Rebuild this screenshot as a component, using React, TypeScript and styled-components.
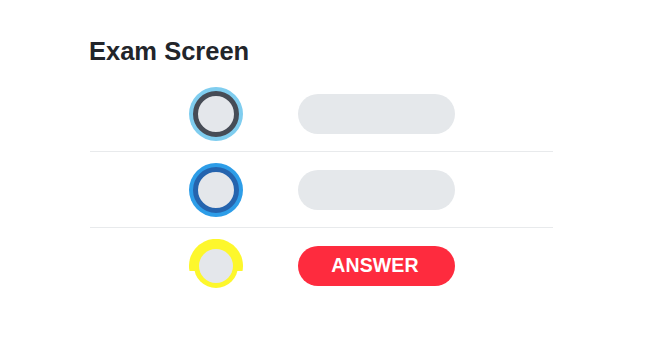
import React from "react";
import styled, { createGlobalStyle } from "styled-components";

const Global = createGlobalStyle`
  html, body { margin: 0; padding: 0; background: #ffffff; }
  body { font-family: "Liberation Sans", Arial, sans-serif; }
`;

const Page = styled.main`
  padding: 36px 0 0 90px;
  width: 463px;
`;

const Title = styled.h1`
  margin: 0 0 10px -1px;
  font-size: 25.5px;
  line-height: 30px;
  font-weight: 700;
  color: #22252a;
`;

const List = styled.div`
  display: flex;
  flex-direction: column;
`;

const Row = styled.div<{ $last?: boolean }>`
  display: flex;
  align-items: center;
  gap: 55px;
  height: 75px;
  padding-left: 99px;
  border-bottom: 1px solid ${(p) => (p.$last ? "transparent" : "#e8eaec")};
`;

const Ring = styled.div<{ $outer: string; $ring: string }>`
  width: 36px;
  height: 36px;
  box-sizing: content-box;
  margin: 4px;
  border-radius: 50%;
  background: #e4e7eb;
  border: 5px solid ${(p) => p.$ring};
  box-shadow: 0 0 0 4px ${(p) => p.$outer};
  flex: none;
`;

const Pill = styled.div<{ $active?: boolean }>`
  width: 157px;
  height: 40px;
  border-radius: 20px;
  background: ${(p) => (p.$active ? "#fe2b3e" : "#e5e8eb")};
  color: #ffffff;
  display: flex;
  align-items: center;
  justify-content: center;
  font-weight: 700;
  font-size: 19.5px;
  letter-spacing: 0.1px;
  padding-right: 3px;
  box-sizing: border-box;
`;

const MarkSvg = styled.svg`
  flex: none;
  display: block;
`;

const YellowMark = () => (
  <MarkSvg width="54" height="54" viewBox="0 0 54 54">
    <path d="M 0.5 32 A 27 27 0 1 1 53.5 32 Z" fill="#fdf72c" />
    <circle cx="27" cy="27" r="22" fill="#fdf72c" />
    <circle cx="27" cy="27" r="17" fill="#e4e7eb" />
  </MarkSvg>
);

export default function App() {
  return (
    <>
      <Global />
      <Page>
        <Title>Exam Screen</Title>
        <List>
          <Row>
            <Ring $outer="#7fcdef" $ring="#464c56" />
            <Pill />
          </Row>
          <Row>
            <Ring $outer="#2d9de8" $ring="#2564ae" />
            <Pill />
          </Row>
          <Row $last>
            <YellowMark />
            <Pill $active>ANSWER</Pill>
          </Row>
        </List>
      </Page>
    </>
  );
}
